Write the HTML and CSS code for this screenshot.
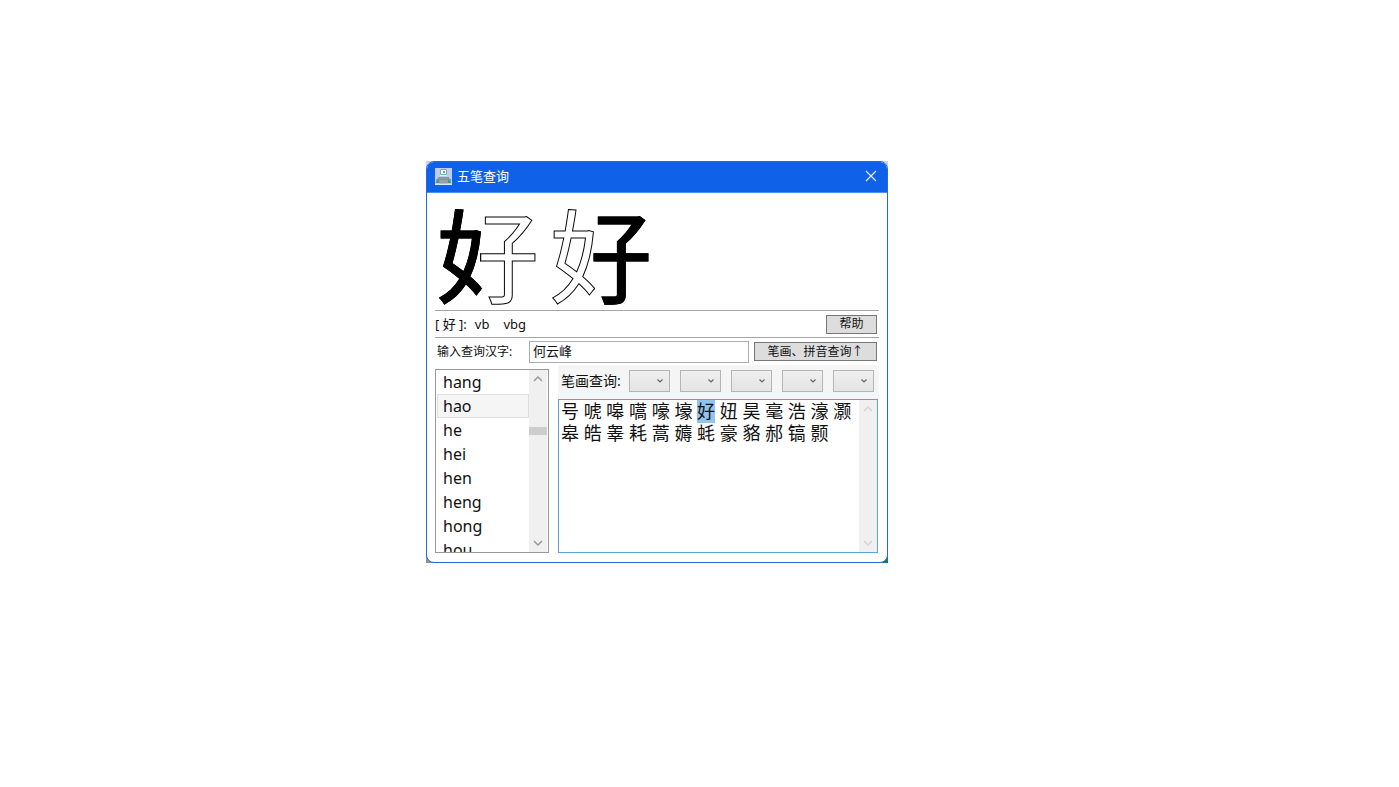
FILE: index.html
```html
<!DOCTYPE html>
<html lang="zh-CN">
<head>
<meta charset="utf-8">
<title>五笔查询</title>
<link rel="stylesheet" href="styles.css">
</head>
<body>
<main class="desktop">
  <div class="backdrop">
  <section class="window">
    <header class="titlebar">
      <svg class="app-icon" width="17" height="17" viewBox="0 0 17 17" aria-hidden="true">
        <rect width="17" height="17" fill="#bccfee"/>
        <rect x="5" y="1" width="7" height="7" fill="#f2f8fa"/>
        <path d="M5.500 1.500h6v5h-6z" fill="none" stroke="#6cb3a8"/>
        <path d="M8 3h2v2H8z" fill="#8d93a0"/>
        <path d="M3 9h11l1 3H2z" fill="#8b9a9e"/>
        <path d="M1 11h15v4H1z" fill="#8496a0"/>
        <path d="M1 15l3-4v4zM16 15l-3-4v4z" fill="#3e9c80"/>
        <path d="M4 13h9M5 15h7" stroke="#a8adb0"/>
        <path d="M0 16.500h17" stroke="#d7e8f0"/>
      </svg>
      <h1 class="title">五笔查询</h1>
      <button class="close" type="button" aria-label="关闭">
        <svg width="12" height="12" viewBox="0 0 12 12"><path d="M1 1l10 10M11 1L1 11" stroke="#e4efff" stroke-width="1.2" fill="none"/></svg>
      </button>
    </header>
    <div class="content">
      <div class="preview"><span class="glyph glyph-left">好</span><span class="glyph glyph-right">好</span></div>
      <div class="result">
        <output class="codes"><span>[ 好 ]:</span><span>vb</span><span class="full-code">vbg</span></output>
        <button class="button help" type="button">帮助</button>
      </div>
      <form class="search">
        <label class="search-label" for="query">输入查询汉字:</label>
        <input class="query" id="query" type="text" value="何云峰">
        <button class="button toggle" type="button">笔画、拼音查询↑</button>
      </form>
      <div class="browser">
        <div class="pinyin">
          <select class="pinyin-list" size="8" aria-label="拼音">
            <option>hang</option><option class="current">hao</option><option>he</option><option>hei</option><option>hen</option><option>heng</option><option>hong</option><option>hou</option>
          </select>
          <div class="scrollbar" aria-hidden="true">
            <svg width="10" height="6" viewBox="0 0 10 6"><path d="M1 5l4-4 4 4"/></svg>
            <div class="thumb"></div>
            <svg width="10" height="6" viewBox="0 0 10 6"><path d="M1 1l4 4 4-4"/></svg>
          </div>
        </div>
        <div class="details">
          <div class="strokes">
            <span class="strokes-label">笔画查询:</span>
            <span class="combo"><select aria-label="第一笔"></select><svg width="6" height="4" viewBox="0 0 6 4"><path d="M0.5 0.5l2.500 2.500 2.500-2.500"/></svg></span>
            <span class="combo"><select aria-label="第二笔"></select><svg width="6" height="4" viewBox="0 0 6 4"><path d="M0.5 0.5l2.500 2.500 2.500-2.500"/></svg></span>
            <span class="combo"><select aria-label="第三笔"></select><svg width="6" height="4" viewBox="0 0 6 4"><path d="M0.5 0.5l2.500 2.500 2.500-2.500"/></svg></span>
            <span class="combo"><select aria-label="第四笔"></select><svg width="6" height="4" viewBox="0 0 6 4"><path d="M0.5 0.5l2.500 2.500 2.500-2.500"/></svg></span>
            <span class="combo"><select aria-label="第五笔"></select><svg width="6" height="4" viewBox="0 0 6 4"><path d="M0.5 0.5l2.500 2.500 2.500-2.500"/></svg></span>
          </div>
          <div class="characters">
            <div class="character-text" contenteditable="true" role="textbox" aria-multiline="true" aria-label="汉字" spellcheck="false">号 唬 嗥 嚆 嚎 壕 <mark>好</mark> 妞 昊 毫 浩 濠 灏<br>皋 皓 睾 耗 蒿 薅 蚝 豪 貉 郝 镐 颢</div>
            <div class="scrollbar faint" aria-hidden="true">
              <svg width="10" height="6" viewBox="0 0 10 6"><path d="M1 5l4-4 4 4"/></svg>
              <svg width="10" height="6" viewBox="0 0 10 6"><path d="M1 1l4 4 4-4"/></svg>
            </div>
          </div>
        </div>
      </div>
    </div>
  </section>
  </div>
</main>
</body>
</html>
```
FILE: styles.css
```css
* { box-sizing: border-box; }
body {
  margin: 0;
  background: #fff;
  color: #111;
  font: 13px/18px "Noto Sans", "Noto Sans CJK SC", sans-serif;
}
button, input, select { font: inherit; color: inherit; margin: 0; }
.desktop { padding: 161px 0 0 426px; }
.backdrop {
  width: 100%;
  max-width: 462px;
  background: linear-gradient(90deg, #8d939b 50%, #12756b 50%) bottom / 100% 50% no-repeat,
              #c9d3e4;
}
.window {
  border: 1px solid #2468dd;
  border-radius: 8px;
  background: #fff;
  overflow: hidden;
}
.titlebar {
  display: flex;
  align-items: center;
  height: 31px;
  padding: 0 10px 2px 8px;
  background: #0f62e8;
  border-bottom: 1px solid #4d8cf0;
  color: #fff;
}
.title { margin: 0 auto 0 5px; font-size: 13px; font-weight: 400; }
.close { display: flex; padding: 0; border: 0; background: none; }
.content { padding: 0 8px 9px; }

.preview { display: flex; height: 118px; border-bottom: 1px solid #a5a5a5; }
.glyph {
  width: 113px;
  padding-left: 2px;
  font: 102px/117px "Noto Sans CJK SC", sans-serif;
  color: transparent;
  -webkit-text-stroke: 1px #000;
  -webkit-background-clip: text;
  background-clip: text;
}
.glyph-left { background-image: linear-gradient(90deg, #000 46px, #fff 46px); }
.glyph-right { background-image: linear-gradient(90deg, #fff 46px, #000 46px); }

.result {
  display: flex;
  align-items: center;
  justify-content: space-between;
  height: 27px;
  padding-right: 2px;
  border-bottom: 1px solid #a5a5a5;
}
.codes { display: flex; gap: 8px; }
.full-code { margin-left: 6px; }
.button {
  display: flex;
  align-items: center;
  justify-content: center;
  height: 19px;
  padding: 0;
  border: 1px solid #777;
  background: #ddd;
  white-space: nowrap;
}
.help { width: 51px; font-size: 12px; }
.toggle { width: 123px; font-size: 12px; }

.search { display: flex; align-items: center; height: 27px; padding: 0 2px; }
.search-label { width: 92px; font-size: 12px; }
.query {
  flex: 1;
  min-width: 0;
  height: 22px;
  margin-right: 5px;
  padding: 0 3px 3px;
  border: 1px solid #ababb3;
  background: #fff;
  outline: 0;
}

.browser { display: flex; gap: 9px; height: 188px; }
.pinyin {
  display: flex;
  width: 114px;
  height: 184px;
  margin-top: 4px;
  padding: 0 1px;
  border: 1px solid #999;
}
.pinyin-list {
  flex: 1;
  min-width: 0;
  height: 100%;
  padding: 0;
  border: 0;
  outline: 0;
  background: #fff;
  font-size: 16px;
  overflow: hidden;
  scrollbar-width: none;
}
.pinyin-list option {
  height: 24px;
  min-height: 24px;
  padding: 0 5px;
  border: 1px solid transparent;
  line-height: 22px;
}
.pinyin-list .current { border-color: #dedede; background: #f5f5f5; }
.scrollbar {
  display: flex;
  flex-direction: column;
  align-items: center;
  justify-content: space-between;
  width: 18px;
  padding: 6px 0;
  background: #f0f0f0;
}
.scrollbar path { fill: none; stroke: #999; stroke-width: 1.5; }
.faint path { stroke: #d4d4d4; }
.thumb { width: 100%; height: 8px; margin: 45px 0 auto; background: #cdcdcd; }

.details { flex: 1; min-width: 0; display: flex; flex-direction: column; }
.strokes {
  display: flex;
  align-items: center;
  gap: 10px;
  height: 34px;
  padding: 0 5px 3px 3px;
  background: #f5f5f5;
}
.strokes-label { flex: 1; margin-right: -10px; font-size: 14px; white-space: nowrap; }
.combo { display: grid; align-items: center; }
.combo select, .combo svg { grid-area: 1 / 1; }
.combo select {
  width: 41px;
  height: 22px;
  padding: 0;
  border: 1px solid #b5b5b5;
  border-radius: 0;
  background: linear-gradient(#efefef, #e4e4e4);
  appearance: none;
}
.combo svg { justify-self: end; margin-right: 7px; pointer-events: none; }
.combo path { fill: none; stroke: #666; stroke-width: 1.2; }
.characters {
  flex: 1;
  display: flex;
  min-height: 0;
  margin-right: 1px;
  border: 1px solid #5a9fe2;
}
.character-text {
  flex: 1;
  min-width: 0;
  padding: 0 2px;
  outline: 0;
  overflow: hidden;
  font-size: 18px;
  line-height: 22px;
}
.character-text mark { background: #91c5f0; color: inherit; }
```
